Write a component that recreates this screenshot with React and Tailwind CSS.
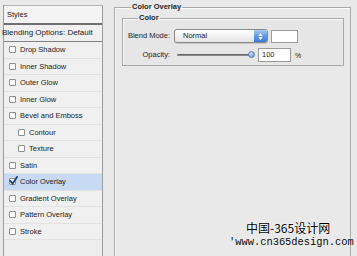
import React from 'react'

const STYLES = [
  { label: 'Drop Shadow' },
  { label: 'Inner Shadow' },
  { label: 'Outer Glow' },
  { label: 'Inner Glow' },
  { label: 'Bevel and Emboss' },
  { label: 'Contour', indent: true },
  { label: 'Texture', indent: true },
  { label: 'Satin' },
  { label: 'Color Overlay', checked: true },
  { label: 'Gradient Overlay' },
  { label: 'Pattern Overlay' },
  { label: 'Stroke' },
]

function Checkbox({ checked }) {
  return (
    <span className="relative w-[7px] h-[7px] shrink-0 border border-[#8e8e8e] bg-white rounded-[1px]">
      {checked && (
        <svg viewBox="0 0 10 10" className="absolute -left-[1px] -top-[3px] w-[9px] h-[9px]">
          <path d="M1.5 5.5 L4 8.5 L9 1" fill="none" stroke="#1d3f78" strokeWidth="2" strokeLinecap="round" />
        </svg>
      )}
    </span>
  )
}

function StyleRow({ item }) {
  return (
    <div
      className={`h-[16.5px] flex items-center border-b border-[#e2e2e2] ${
        item.checked ? 'bg-[#c6daf3]' : 'bg-[#f0f0f0]'
      } ${item.indent ? 'pl-[14px]' : 'pl-[5px]'}`}
    >
      <Checkbox checked={item.checked} />
      <span className="ml-[4px] text-[7.5px] leading-none whitespace-nowrap">{item.label}</span>
    </div>
  )
}

export default function App() {
  return (
    <div className="w-[357px] h-[256px] bg-[#e9e9e9] relative overflow-hidden flex items-start font-['Liberation_Sans',Arial,sans-serif] text-[#222222]">
      {/* left: styles list */}
      <div className="ml-[3px] mt-[5px] w-[100px] h-[260px] border-x border-[#9c9c9c] bg-[#ededed] flex flex-col">
        <div className="h-[20px] border-t border-[#b4b4b4] border-b-2 border-b-[#6f6f6f] bg-[#f4f4f4] pl-[3px] flex items-center text-[7.5px]">
          Styles
        </div>
        <div className="h-[17px] border-b border-[#808080] bg-[#f0f0f0] flex items-center">
          <span className="-ml-[2px] text-[8px] leading-none whitespace-nowrap">Blending Options: Default</span>
        </div>
        {STYLES.map((item) => (
          <StyleRow key={item.label} item={item} />
        ))}
      </div>

      {/* right: color overlay panel */}
      <fieldset className="ml-[11px] mt-[2px] w-[237px] h-[270px] border border-[#a9a9a9] shadow-[inset_1px_1px_0_#fafafa]">
        <legend className="ml-[16px] px-[1px] text-[7.5px] leading-[10px] font-bold">Color Overlay</legend>
        <fieldset className="ml-[7px] mt-[1px] w-[222px] border border-[#a9a9a9] bg-[#e6e6e6] pb-[3px] shadow-[inset_1px_1px_0_#fafafa]">
          <legend className="ml-[15px] px-[1px] text-[7.5px] leading-[10px] font-bold">Color</legend>

          <div className="mt-[6px] h-[14px] flex items-center">
            <span className="w-[47px] text-right text-[7.5px] whitespace-nowrap">Blend Mode:</span>
            <div className="ml-[4px] w-[94px] h-[14px] flex items-center rounded-[3px] border border-[#8a8a8a] bg-linear-to-b from-white to-[#e4e4e4] shadow-[0_1px_1px_rgba(0,0,0,0.15)]">
              <span className="flex-1 pl-[8px] text-[7.5px] leading-none">Normal</span>
              <span className="w-[13px] h-full rounded-r-[2px] bg-linear-to-b from-[#a9c9f2] via-[#5e9ae6] to-[#3a78d4] flex flex-col items-center justify-center gap-[1px]">
                <svg viewBox="0 0 6 4" className="w-[5px] h-[3px]">
                  <path d="M0 4 L3 0 L6 4 Z" fill="#ffffff" />
                </svg>
                <svg viewBox="0 0 6 4" className="w-[5px] h-[3px]">
                  <path d="M0 0 L3 4 L6 0 Z" fill="#ffffff" />
                </svg>
              </span>
            </div>
            <div className="ml-[3px] w-[27px] h-[13px] bg-white border border-[#9a9a9a]" />
          </div>

          <div className="mt-[5px] h-[14px] flex items-center">
            <span className="w-[47px] text-right text-[7.5px] whitespace-nowrap">Opacity:</span>
            <div className="ml-[7px] w-[78px] h-[10px] relative flex items-center">
              <div className="w-[76px] h-[2px] rounded-full bg-linear-to-b from-[#5a5a5a] to-[#9a9a9a]" />
              <span className="absolute right-0 top-[1px] w-[7px] h-[7px] rounded-full bg-radial-[at_35%_30%] from-[#d6e6fb] to-[#4a84d6] border border-[#5b7fb3]" />
            </div>
            <div className="ml-[3px] w-[33px] h-[14px] bg-white border border-[#9a9a9a] flex items-center pl-[3px] text-[7.5px] leading-none">
              100
            </div>
            <span className="ml-[4px] text-[7px] leading-none">%</span>
          </div>
        </fieldset>
      </fieldset>

      {/* watermark */}
      <div className="absolute left-[246px] top-[220px] text-[12px] leading-[15px] text-black font-['Noto_Sans_CJK_SC',sans-serif] whitespace-nowrap [text-shadow:0_0_2px_#fff,0_0_1px_#fff]">
        中国-365设计网
      </div>
      <div className="absolute left-[229px] top-[236px] text-[10.4px] leading-[13px] text-black font-['Liberation_Mono',monospace] whitespace-nowrap [text-shadow:0_0_2px_#fff,0_0_1px_#fff]">
        'www.cn365design.com
      </div>
    </div>
  )
}
